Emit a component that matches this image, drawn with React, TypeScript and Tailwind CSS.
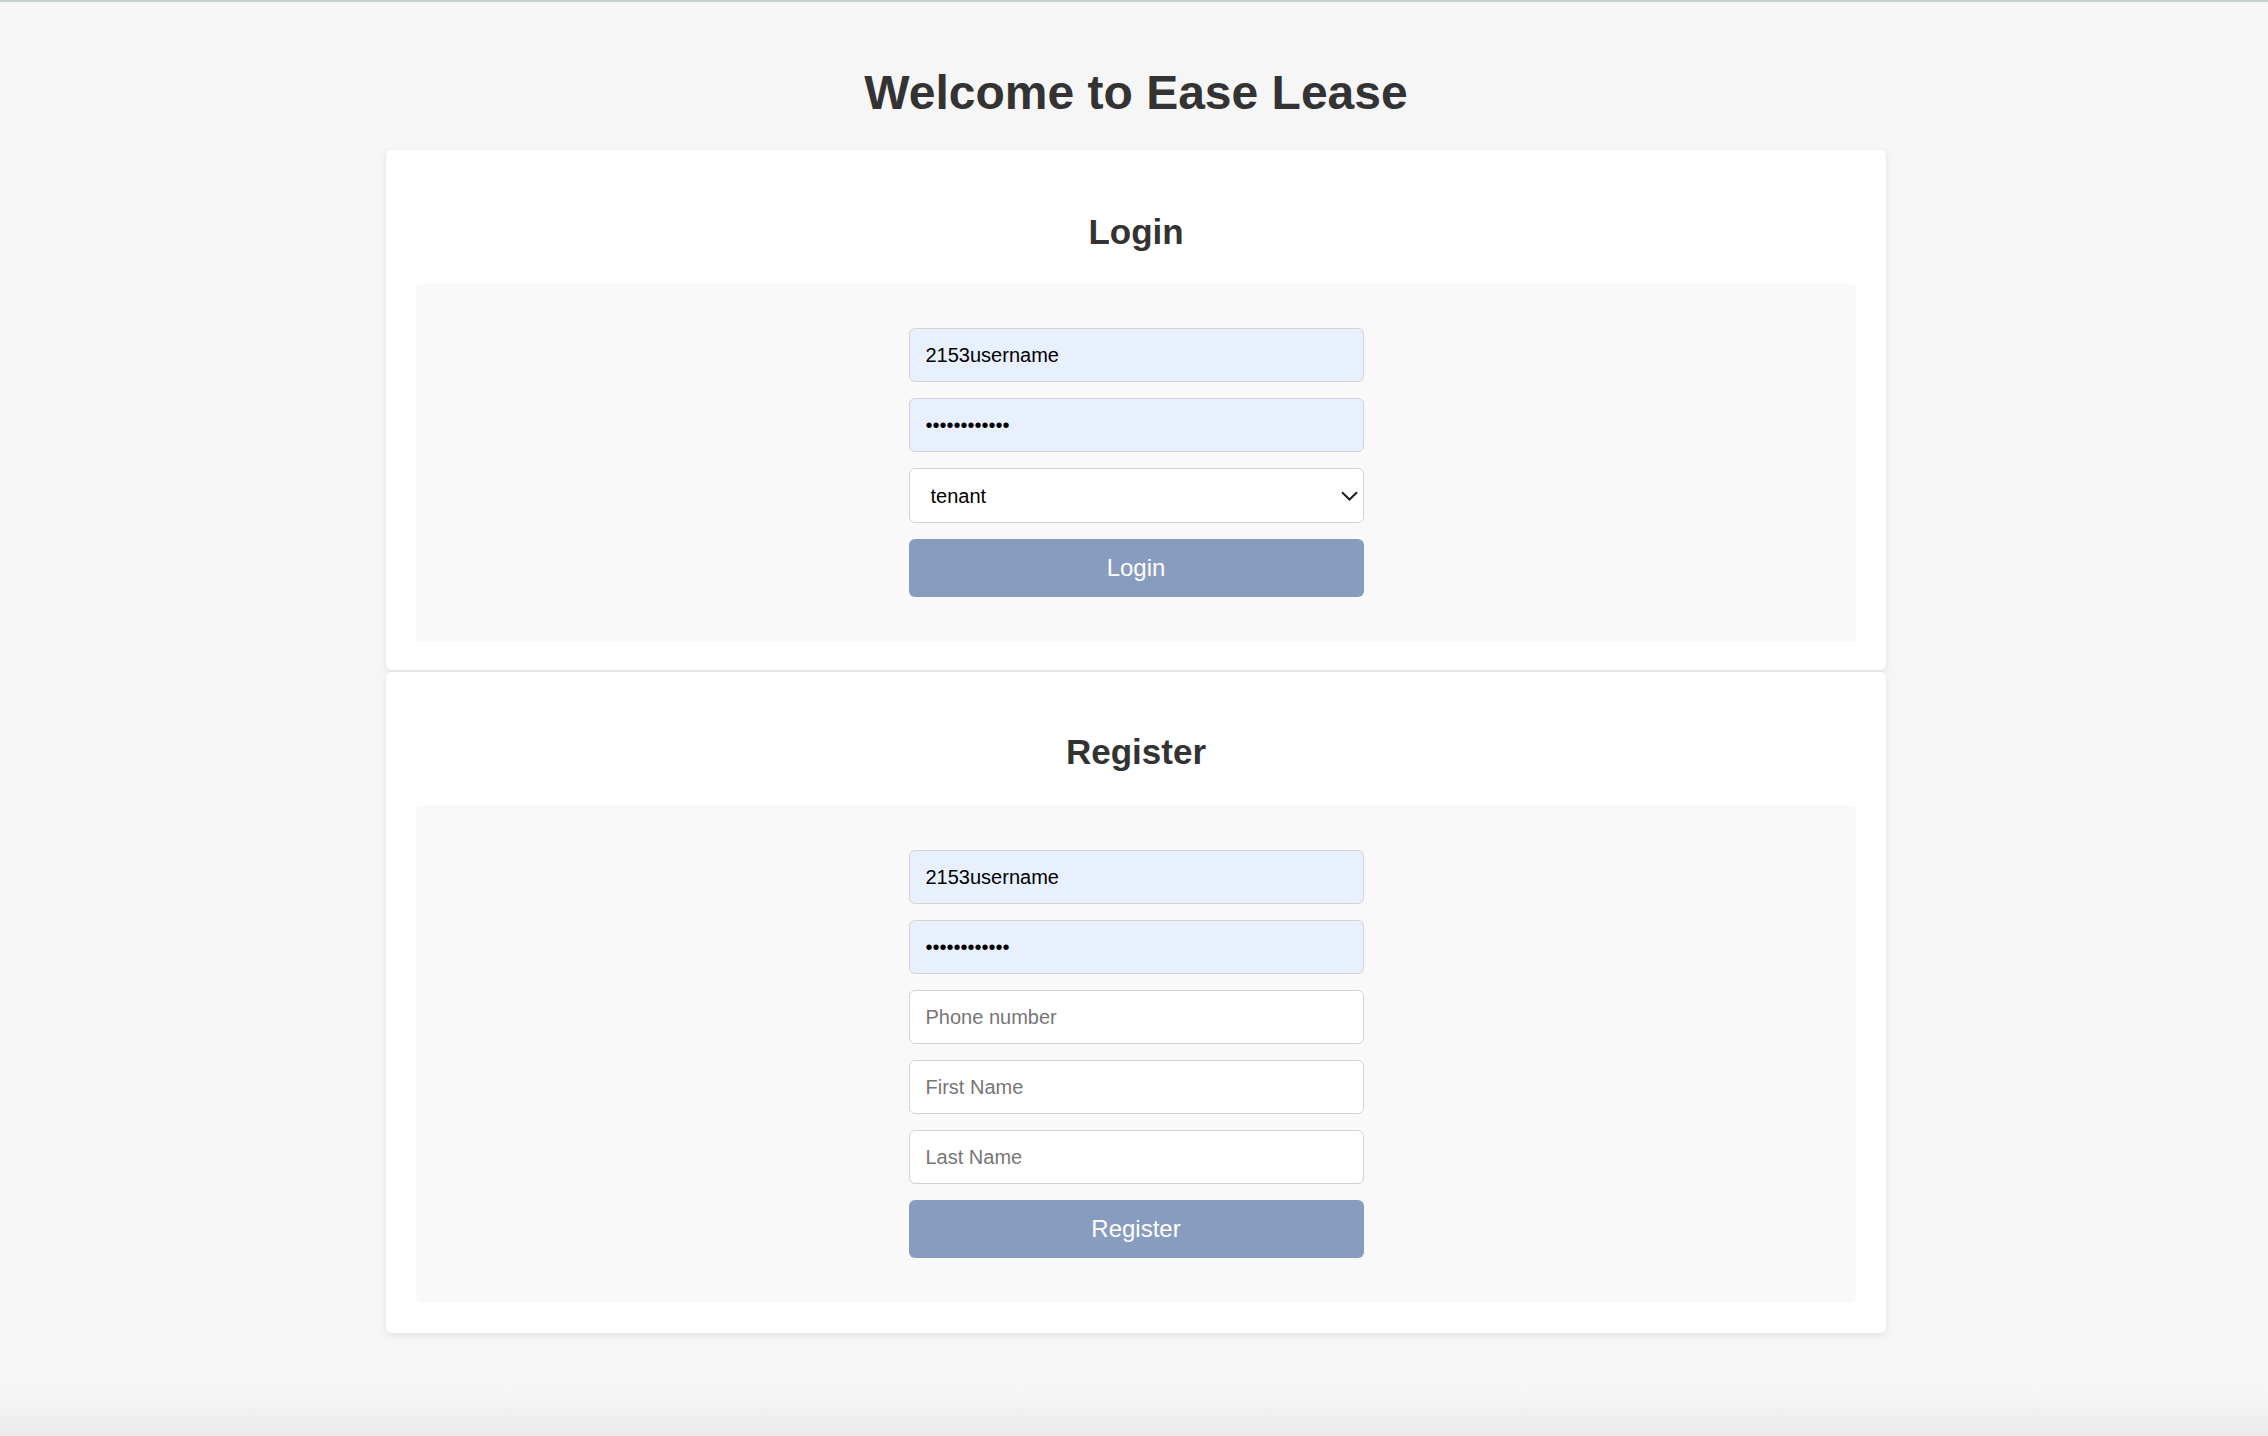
import React from 'react';

const font = { fontFamily: '"Liberation Sans", Arial, Helvetica, sans-serif' };

const inputBase =
  'block w-[455px] h-[54px] rounded-[6px] border border-[#d3d3d3] px-[16px] text-[20px] text-black outline-none placeholder:text-[#767676]';

interface FieldProps {
  type?: string;
  value?: string;
  placeholder?: string;
  filled?: boolean;
}

const Field: React.FC<FieldProps> = ({ type = 'text', value, placeholder, filled = false }) => (
  <input
    type={type}
    defaultValue={value}
    placeholder={placeholder}
    className={`${inputBase} ${filled ? 'bg-[#e8f0fe]' : 'bg-white'}`}
    style={font}
  />
);

const SubmitButton: React.FC<{ label: string }> = ({ label }) => (
  <button
    type="button"
    className="block w-[455px] h-[58px] rounded-[6px] bg-[#879cbe] text-white text-[24px] leading-none"
    style={font}
  >
    {label}
  </button>
);

const Card: React.FC<{ title: string; spacing?: string; bottom?: string; children: React.ReactNode }> = ({
  title,
  spacing = 'mt-[32px] mb-[31px]',
  bottom = 'pb-[30px]',
  children
}) => (
  <section
    className={`w-[1500px] mx-auto bg-white rounded-[6px] shadow-[0_2px_6px_rgba(0,0,0,0.09)] px-[30px] pt-[30px] ${bottom}`}
  >
    <h2
      className={`${spacing} text-center text-[35px] leading-[40px] font-bold text-[#333333]`}
      style={font}
    >
      {title}
    </h2>
    <div className="bg-[#f9f9f9] rounded-[5px] py-[45px] flex flex-col items-center gap-[16px]">
      {children}
    </div>
  </section>
);

export default function App() {
  return (
    <div className="h-[1436px] flex flex-col bg-[#f6f6f6] overflow-hidden" style={font}>
      <div className="h-[2px] bg-[#bfd1d1]" />
      <main className="flex-1 pt-[63px] pl-[4px]">
        <h1 className="mb-[30px] text-center text-[48px] leading-[55px] font-bold text-[#333333]">
          Welcome to Ease Lease
        </h1>

        <Card title="Login" bottom="pb-[28px]">
          <Field value="2153username" filled />
          <Field type="password" value="passwordxxxx" filled />
          <div className="relative w-[455px]">
            <select
              defaultValue="tenant"
              className="block w-[455px] h-[55px] appearance-none rounded-[6px] border border-[#d3d3d3] bg-white pl-[21px] text-[20px] text-black outline-none"
              style={font}
            >
              <option value="tenant">tenant</option>
              <option value="landlord">landlord</option>
            </select>
            <svg
              className="absolute right-[6px] top-[23px] pointer-events-none"
              width="17"
              height="10"
              viewBox="0 0 17 10"
              fill="none"
            >
              <path d="M1 1.2 L8.5 8.5 L16 1.2" stroke="#1f1f1f" strokeWidth="2" />
            </svg>
          </div>
          <SubmitButton label="Login" />
        </Card>

        <div className="h-[2px]" />

        <Card title="Register" spacing="mt-[30px] mb-[33px]">
          <Field value="2153username" filled />
          <Field type="password" value="passwordxxxx" filled />
          <Field placeholder="Phone number" />
          <Field placeholder="First Name" />
          <Field placeholder="Last Name" />
          <SubmitButton label="Register" />
        </Card>
      </main>
      <div className="h-[46px] bg-gradient-to-b from-[#f6f6f6] to-[#ebebeb]" />
    </div>
  );
}
